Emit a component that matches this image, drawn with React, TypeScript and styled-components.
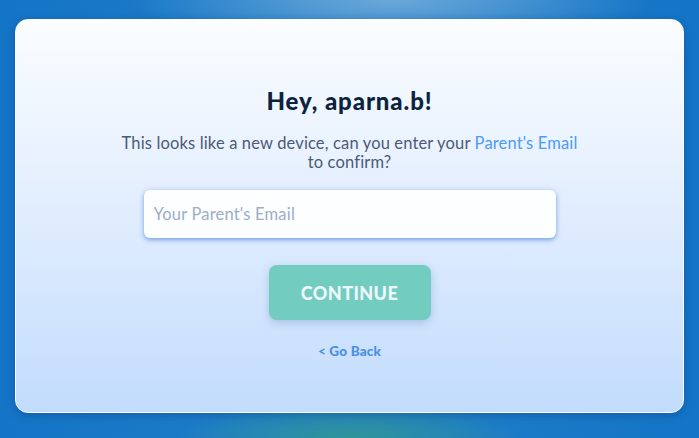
import React from "react";
import styled, { createGlobalStyle } from "styled-components";

const Global = createGlobalStyle`
  html, body { margin: 0; padding: 0; height: 100%; }
  body {
    font-family: Lato, "Noto Sans", sans-serif;
    background: #1b78c4;
  }
  #root { height: 100%; }
`;

const Page = styled.div`
  width: 699px;
  height: 438px;
  box-sizing: border-box;
  padding: 19px 15px 25px 15px;
  background:
    radial-gradient(ellipse 170px 38px at 50% 100%, rgba(48, 150, 150, 0.95), rgba(48, 150, 150, 0) 100%),
    radial-gradient(ellipse 260px 50px at 56% 0%, rgba(120, 175, 220, 0.85), rgba(120, 175, 220, 0) 100%),
    linear-gradient(90deg, #1474c6 0%, #2280c8 50%, #1474c6 100%);
`;

const Card = styled.div`
  box-sizing: border-box;
  height: 394px;
  border: 1.5px solid #ffffff;
  border-radius: 13px;
  background: linear-gradient(180deg, #fbfdff 0%, #e6f0fe 40%, #c2dcfd 100%);
  box-shadow: 0 2px 8px rgba(10, 50, 110, 0.35);
  display: flex;
  flex-direction: column;
  align-items: center;
  padding-top: 66px;
`;

const Title = styled.h1`
  margin: 0;
  font-family: Lato, sans-serif;
  font-weight: 900;
  font-size: 24px;
  line-height: 30px;
  color: #0c2340;
  letter-spacing: 0.9px;
`;

const Message = styled.p`
  margin: 18px 0 0 0;
  width: 470px;
  text-align: center;
  font-size: 16.5px;
  line-height: 19px;
  letter-spacing: 0.15px;
  color: #4b5a78;
`;

const Link = styled.span`
  color: #4a9cf6;
`;

const Input = styled.input`
  margin-top: 18px;
  width: 412px;
  height: 48px;
  box-sizing: border-box;
  border: none;
  outline: none;
  border-radius: 6px;
  background: #fdfeff;
  padding: 0 10px;
  font-family: Lato, sans-serif;
  font-size: 16.5px;
  letter-spacing: 0.2px;
  color: #33435e;
  box-shadow: 0 2px 4px rgba(60, 120, 210, 0.55), 0 0 6px rgba(120, 160, 220, 0.25);
  &::placeholder { color: #9cadc9; }
`;

const Button = styled.button`
  margin-top: 27px;
  width: 162px;
  height: 55px;
  border: none;
  border-radius: 8px;
  background: #72ccc0;
  color: #eef8fb;
  font-family: Lato, sans-serif;
  font-weight: 900;
  font-size: 18px;
  letter-spacing: 0.4px;
  box-shadow: 0 3px 8px rgba(80, 120, 170, 0.3);
  cursor: pointer;
`;

const Back = styled.a`
  margin-top: 23px;
  font-family: Lato, sans-serif;
  font-weight: 900;
  font-size: 13.5px;
  letter-spacing: 0.2px;
  color: #4a8fe6;
  text-decoration: none;
  cursor: pointer;
`;

export default function App() {
  return (
    <>
      <Global />
      <Page>
        <Card>
          <Title>Hey, aparna.b!</Title>
          <Message>
            This looks like a new device, can you enter your <Link>Parent's Email</Link>
            <br />
            to confirm?
          </Message>
          <Input placeholder="Your Parent's Email" />
          <Button>CONTINUE</Button>
          <Back>&lt; Go Back</Back>
        </Card>
      </Page>
    </>
  );
}
